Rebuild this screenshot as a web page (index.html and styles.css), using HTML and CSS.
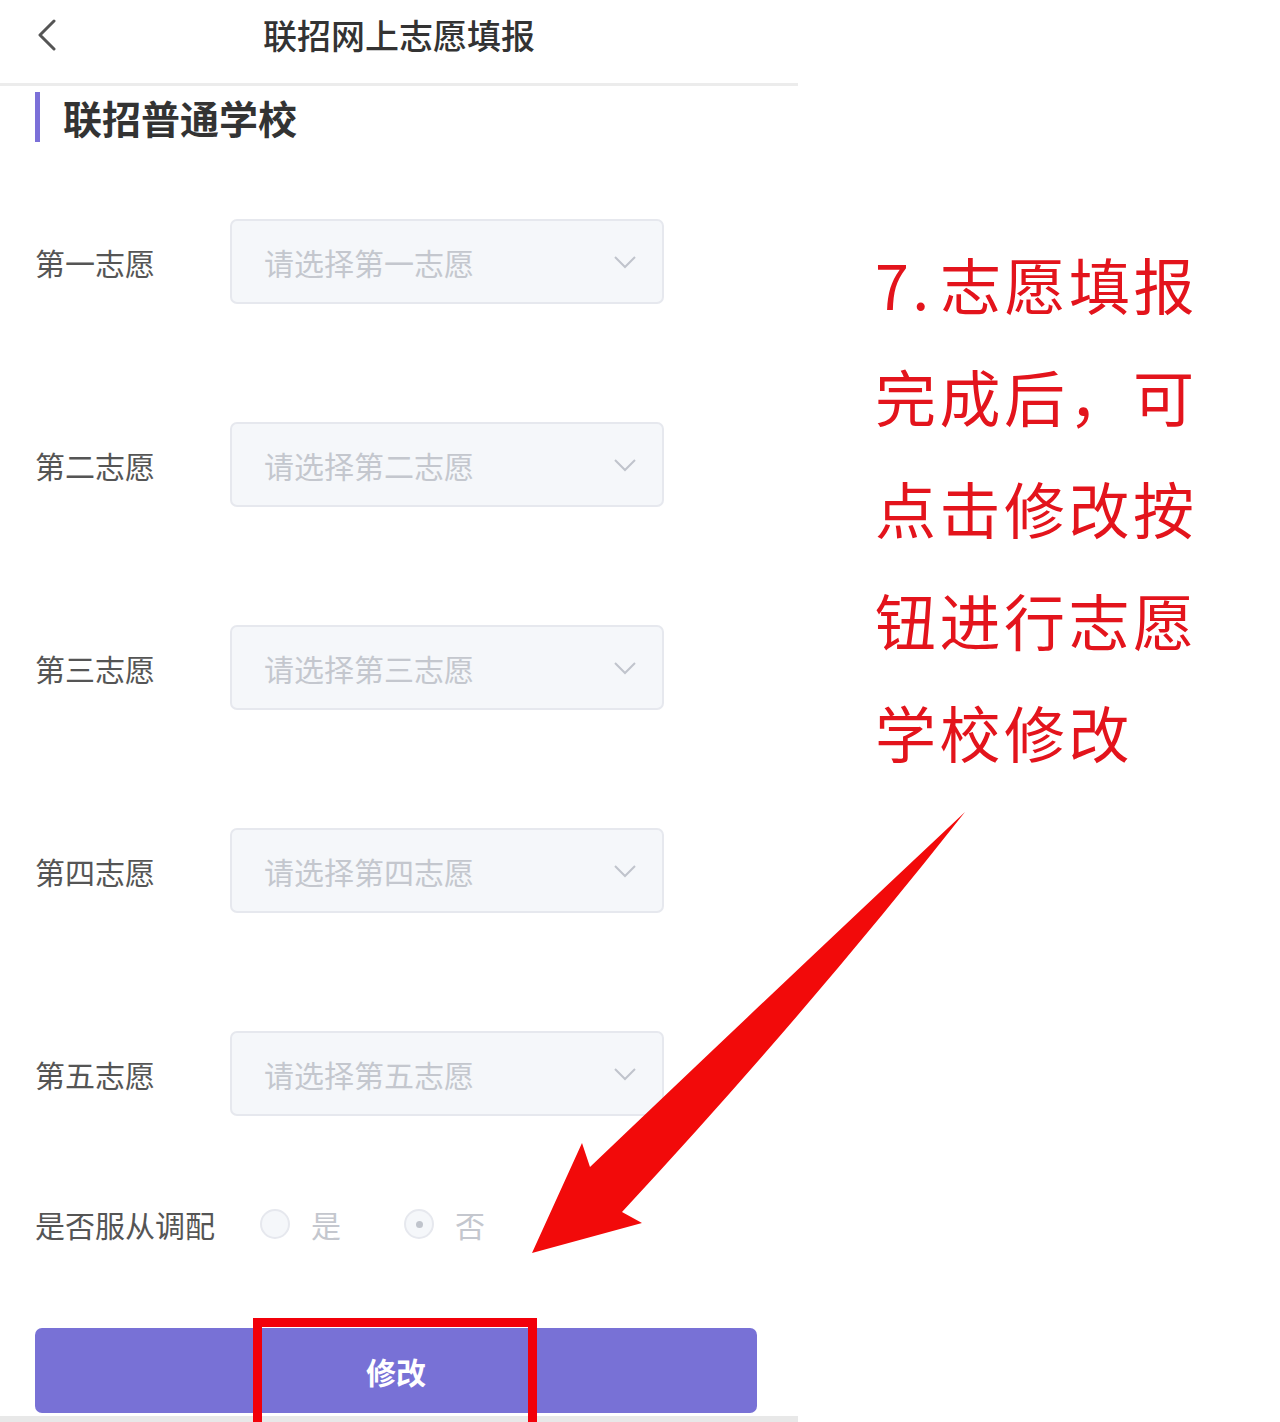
FILE: index.html
```html
<!DOCTYPE html>
<html lang="zh-CN">
<head>
<meta charset="utf-8">
<title>联招网上志愿填报</title>
<link rel="stylesheet" href="styles.css">
</head>
<body>
<div class="page">
  <div class="phone">
    <div class="header">
      <div class="back">
        <svg width="22" height="32" viewBox="0 0 22 32"><path d="M18 2 L4 16 L18 30" fill="none" stroke="#555" stroke-width="3" stroke-linecap="round" stroke-linejoin="round"/></svg>
      </div>
      <div class="title">联招网上志愿填报</div>
      <div></div>
    </div>
    <div class="section-title">联招普通学校</div>
    <div class="form">
      <div class="row"><div class="label">第一志愿</div><div class="select"><span class="ph">请选择第一志愿</span><svg class="chev" width="24" height="14" viewBox="0 0 24 14"><path d="M2 2 L12 12 L22 2" fill="none" stroke="#c0c4cc" stroke-width="2"/></svg></div></div>
      <div class="row"><div class="label">第二志愿</div><div class="select"><span class="ph">请选择第二志愿</span><svg class="chev" width="24" height="14" viewBox="0 0 24 14"><path d="M2 2 L12 12 L22 2" fill="none" stroke="#c0c4cc" stroke-width="2"/></svg></div></div>
      <div class="row"><div class="label">第三志愿</div><div class="select"><span class="ph">请选择第三志愿</span><svg class="chev" width="24" height="14" viewBox="0 0 24 14"><path d="M2 2 L12 12 L22 2" fill="none" stroke="#c0c4cc" stroke-width="2"/></svg></div></div>
      <div class="row"><div class="label">第四志愿</div><div class="select"><span class="ph">请选择第四志愿</span><svg class="chev" width="24" height="14" viewBox="0 0 24 14"><path d="M2 2 L12 12 L22 2" fill="none" stroke="#c0c4cc" stroke-width="2"/></svg></div></div>
      <div class="row"><div class="label">第五志愿</div><div class="select"><span class="ph">请选择第五志愿</span><svg class="chev" width="24" height="14" viewBox="0 0 24 14"><path d="M2 2 L12 12 L22 2" fill="none" stroke="#c0c4cc" stroke-width="2"/></svg></div></div>
    </div>
    <div class="radio-row">
      <div class="label">是否服从调配</div>
      <div class="radios">
        <div class="radio"><span class="circle"></span><span class="rtext">是</span></div>
        <div class="radio"><span class="circle checked"></span><span class="rtext">否</span></div>
      </div>
    </div>
    <div class="btn">修改</div>
    <div class="bottom-line"></div>
  </div>
  <div class="note">
    <div>7. 志愿填报</div>
    <div>完成后，可</div>
    <div>点击修改按</div>
    <div>钮进行志愿</div>
    <div>学校修改</div>
  </div>
  <div class="redbox"></div>
  <svg class="arrow" width="1280" height="1422" viewBox="0 0 1280 1422">
    <path d="M532,1253 L582,1143 L590,1167 Q765,1000 965,812 Q805,1015 622,1212 L642,1223 Z" fill="#f20a0a"/>
  </svg>
</div>
</body>
</html>
```
FILE: styles.css
```css
html, body {
  margin: 0;
  padding: 0;
  background: #fff;
}
body {
  width: 1280px;
  height: 1422px;
  overflow: hidden;
  font-family: "Noto Sans CJK SC", "Noto Sans", sans-serif;
}
.page {
  position: relative;
  display: flex;
  width: 1280px;
  height: 1422px;
}
.phone {
  width: 798px;
  flex: none;
  display: flex;
  flex-direction: column;
}
.header {
  height: 70px;
  padding-bottom: 14px;
  display: grid;
  grid-template-columns: 1fr auto 1fr;
  align-items: center;
  border-bottom: 3px solid #ececec;
}
.back {
  padding-left: 36px;
  display: flex;
  align-items: center;
}
.title {
  font-size: 34px;
  font-weight: 500;
  color: #333;
  line-height: 40px;
}
.section-title {
  margin-top: 6px;
  margin-left: 35px;
  height: 50px;
  line-height: 50px;
  border-left: 5px solid #7b70d8;
  padding-left: 23px;
  font-size: 39px;
  font-weight: 700;
  color: #333;
}
.form {
  margin-top: 77px;
  display: flex;
  flex-direction: column;
  gap: 118px;
}
.row {
  display: flex;
  align-items: center;
  height: 85px;
}
.label {
  width: 230px;
  padding-left: 35px;
  box-sizing: border-box;
  flex: none;
  font-size: 30px;
  color: #555;
  line-height: 40px;
  white-space: nowrap;
}
.select {
  width: 434px;
  height: 85px;
  box-sizing: border-box;
  border: 2px solid #e6e8ee;
  border-radius: 7px;
  background: #f5f7fa;
  display: flex;
  align-items: center;
  justify-content: space-between;
  padding: 0 25px 0 32px;
}
.ph {
  font-size: 30px;
  color: #c4c7ce;
}
.chev {
  display: block;
}
.radio-row {
  margin-top: 88px;
  height: 40px;
  display: flex;
  align-items: center;
}
.radios {
  margin-left: 30px;
  display: flex;
  gap: 63px;
}
.radio {
  display: flex;
  align-items: center;
  gap: 21px;
}
.circle {
  width: 30px;
  height: 30px;
  box-sizing: border-box;
  border-radius: 50%;
  border: 2px solid #e6e8ee;
  background: #f5f7fa;
  display: flex;
  align-items: center;
  justify-content: center;
}
.circle.checked::after {
  content: "";
  width: 7px;
  height: 7px;
  border-radius: 50%;
  background: #c0c4cc;
}
.rtext {
  font-size: 30px;
  color: #c4c7ce;
  line-height: 40px;
}
.btn {
  margin: 84px 41px 0 35px;
  height: 86px;
  border-radius: 7px;
  background: #7871d6;
  color: #fff;
  font-size: 30px;
  font-weight: 700;
  display: flex;
  align-items: center;
  justify-content: center;
}
.bottom-line {
  margin-top: 3px;
  height: 6px;
  background: #e8e8e8;
}
.note {
  margin-left: 77px;
  padding-top: 228px;
  color: #e3141c;
  font-size: 61px;
  letter-spacing: 3.5px;
  word-spacing: -10px;
  line-height: 112px;
  white-space: nowrap;
}
.redbox {
  position: absolute;
  left: 253px;
  top: 1318px;
  width: 284px;
  height: 120px;
  box-sizing: border-box;
  border: 9px solid #f2000a;
}
.arrow {
  position: absolute;
  left: 0;
  top: 0;
  pointer-events: none;
}
```
